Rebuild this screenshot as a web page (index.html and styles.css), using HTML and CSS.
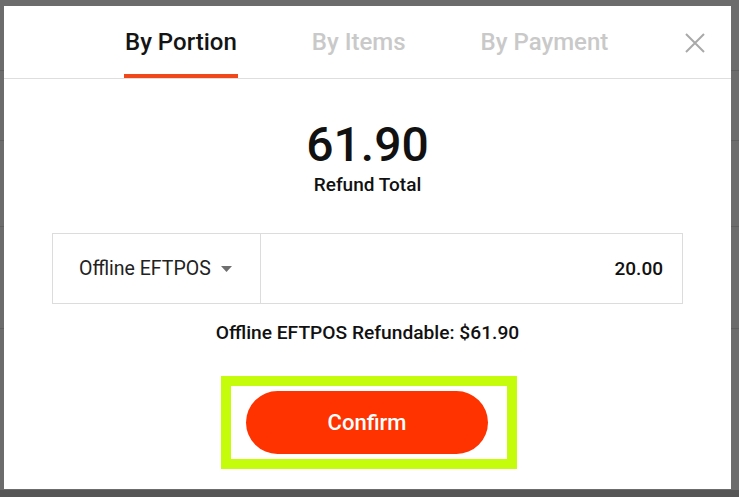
FILE: index.html
```html
<!DOCTYPE html>
<html lang="en">
<head>
<meta charset="utf-8">
<title>Refund</title>
<link rel="stylesheet" href="styles.css">
</head>
<body>
<div class="screen">
  <div class="modal">
    <div class="header">
      <div class="tabs">
        <div class="tab active">By Portion</div>
        <div class="tab">By Items</div>
        <div class="tab">By Payment</div>
      </div>
      <div class="close" aria-label="Close">
        <svg width="20" height="20" viewBox="0 0 20 20">
          <path d="M1 1 L19 19 M19 1 L1 19" stroke="#a9a9a9" stroke-width="2" fill="none"/>
        </svg>
      </div>
    </div>
    <div class="content">
      <div class="total">61.90</div>
      <div class="total-label">Refund Total</div>
      <div class="entry">
        <div class="method">
          <span>Offline EFTPOS</span>
          <svg class="caret" width="11" height="6" viewBox="0 0 11 6"><path d="M0 0 H11 L5.5 6 Z" fill="#6f6f6f"/></svg>
        </div>
        <div class="amount">20.00</div>
      </div>
      <div class="refundable">Offline EFTPOS Refundable: $61.90</div>
      <div class="highlight">
        <button class="confirm">Confirm</button>
      </div>
    </div>
  </div>
</div>
</body>
</html>
```
FILE: styles.css
```css
html, body {
  margin: 0;
  padding: 0;
}
body {
  width: 739px;
  height: 497px;
  overflow: hidden;
  font-family: Roboto, "Liberation Sans", sans-serif;
  background:
    linear-gradient(#5f5f5f, #5f5f5f) 0 70px / 100% 1px no-repeat,
    linear-gradient(#5f5f5f, #5f5f5f) 0 140px / 100% 1px no-repeat,
    linear-gradient(#5f5f5f, #5f5f5f) 0 226px / 100% 1px no-repeat,
    linear-gradient(#5f5f5f, #5f5f5f) 0 328px / 100% 1px no-repeat,
    linear-gradient(#565656, #565656) 0 490px / 100% 7px no-repeat,
    #6c6c6c;
}
.screen {
  padding: 6px 0 0 4px;
}
.modal {
  width: 727px;
  height: 483px;
  background: #fff;
  display: flex;
  flex-direction: column;
}
.header {
  display: flex;
  height: 72px;
  border-bottom: 1px solid #dedede;
}
.tabs {
  display: flex;
  gap: 73px;
  padding-left: 120px;
}
.tab {
  font-size: 24px;
  font-weight: 500;
  line-height: 28px;
  padding: 22px 1px 18px;
  border-bottom: 4px solid transparent;
  color: #c9c9c9;
}
.tab.active {
  color: #141414;
  border-bottom-color: #f0481b;
}
.close {
  margin-left: auto;
  margin-right: 26px;
  margin-top: 27px;
  width: 20px;
  height: 20px;
}
.content {
  display: flex;
  flex-direction: column;
  align-items: center;
  padding-top: 38px;
}
.total {
  font-size: 48px;
  font-weight: 500;
  line-height: 56px;
  color: #111;
}
.total-label {
  font-size: 19px;
  font-weight: 500;
  line-height: 22px;
  margin-top: 1px;
  color: #111;
}
.entry {
  margin-top: 37px;
  width: 629px;
  height: 69px;
  border: 1px solid #dcdcdc;
  display: flex;
}
.method {
  width: 208px;
  border-right: 1px solid #dcdcdc;
  display: flex;
  align-items: center;
  gap: 10px;
  padding-left: 26px;
  box-sizing: border-box;
  font-size: 19.5px;
  color: #222;
}
.caret {
  margin-top: 1px;
}
.amount {
  flex: 1;
  display: flex;
  align-items: center;
  justify-content: flex-end;
  padding-right: 19px;
  font-size: 19px;
  font-weight: 500;
  color: #111;
}
.refundable {
  margin-top: 17px;
  font-size: 19.2px;
  font-weight: 500;
  line-height: 24px;
  color: #111;
}
.highlight {
  margin-top: 31px;
  margin-left: 3px;
  border: 10px solid #c4fc0c;
  padding: 5px 19px 5px 15px;
}
.confirm {
  display: block;
  width: 242px;
  height: 63px;
  border: none;
  border-radius: 32px;
  background: #fe3300;
  color: #fff;
  font-family: Roboto, "Liberation Sans", sans-serif;
  font-size: 22px;
  font-weight: 500;
}
```
